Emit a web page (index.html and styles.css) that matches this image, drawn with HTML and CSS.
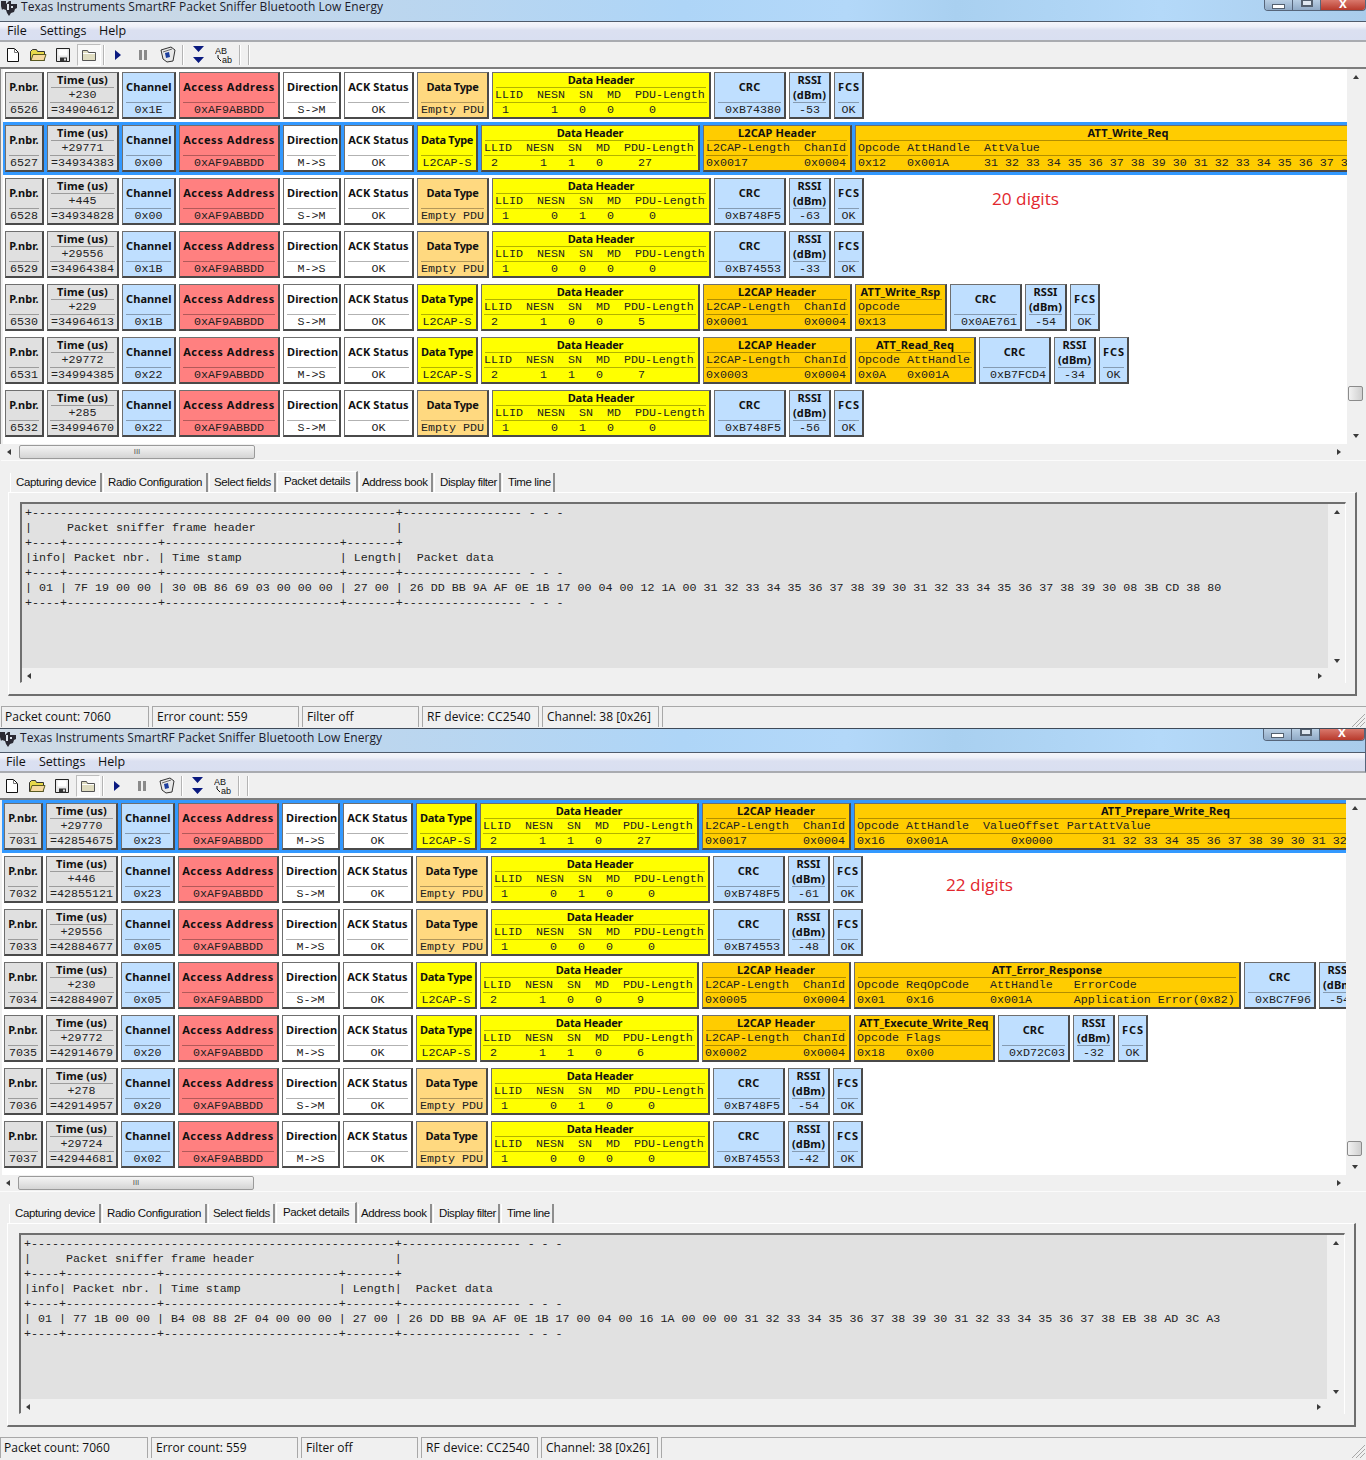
FILE: index.html
```html
<!DOCTYPE html>
<html lang="en">
<head>
<meta charset="utf-8">
<title>Texas Instruments SmartRF Packet Sniffer Bluetooth Low Energy</title>
<link rel="stylesheet" href="styles.css">
</head>
<body>
<svg class="defs" width="0" height="0">
  <symbol id="i-logo" viewBox="0 0 18 16"><path d="M1 1h5v3l3-3h2v3h6v4l-2 1-1 3-3 1-2 3-2-3-1-3-3-1-1 1-1-4z" fill="#2a2a33"/><path d="M7 4h2v6H7zM11 6h2v2h-2z" fill="#dfe6ee"/></symbol>
  <symbol id="i-new" viewBox="0 0 14 16"><path d="M1.500 1.500h7l4 4v9h-11z" fill="#fff" stroke="#111"/><path d="M8.500 1.500v4h4" fill="none" stroke="#777"/></symbol>
  <symbol id="i-open" viewBox="0 0 18 16"><path d="M1.500 13.500v-9l2-2h4l1 2h7v9z" fill="#e8d84a" stroke="#333"/><path d="M2 13.500l2-6h13l-2 6z" fill="#f6d9a0" stroke="#5a5a20"/></symbol>
  <symbol id="i-save" viewBox="0 0 16 16"><path d="M1.500 1.500h13v13h-13z" fill="#e8e8e8" stroke="#222"/><path d="M3.500 2.500h9v6h-9z" fill="#fff"/><path d="M5 10.500h7v4H5z" fill="#333"/><path d="M9 11.500h2v2H9z" fill="#ddd"/></symbol>
  <symbol id="i-folder" viewBox="0 0 16 14"><path d="M1.500 12.500v-10h5l1 2h7v8z" fill="#dfdcc0" stroke="#555"/><path d="M2 5.500h12" stroke="#fff"/></symbol>
  <symbol id="i-play" viewBox="0 0 8 12"><path d="M1 1l6 5-6 5z" fill="#0a1a80"/></symbol>
  <symbol id="i-pause" viewBox="0 0 10 10"><path d="M1 0h3v10H1zM6 0h3v10H6z" fill="#8a8a8a"/></symbol>
  <symbol id="i-bin" viewBox="0 0 16 17"><path d="M1 4l10-3 4 3-2 11-6 1-4-3z" fill="#e8e8e8" stroke="#333"/><path d="M5 7l4-1 1 5-4 1z" fill="#1e3f9e"/><path d="M3 6l9-3" stroke="#666"/></symbol>
  <symbol id="i-down" viewBox="0 0 11 17"><path d="M0 0h11L5.500 6zM0 11h11l-5.500 6z" fill="#0a1a80"/></symbol>
  <symbol id="i-ab" viewBox="0 0 18 18"><text x="0" y="8" class="ab">AB</text><text x="7" y="17" class="ab">ab</text><path d="M3 9v3l3 3" fill="none" stroke="#111"/></symbol>
  <symbol id="i-grip" viewBox="0 0 16 16"><path d="M15 2L2 15M15 6L6 15M15 10l-5 5" stroke="#a8a8a8"/></symbol>
</svg>

<section class="win">
  <header class="title"><svg class="logo"><use href="#i-logo"/></svg><span class="title-text">Texas Instruments SmartRF Packet Sniffer Bluetooth Low Energy</span><div class="wctl"><span class="wmin"><i></i></span><span class="wmax"><i></i></span><span class="wcls">x</span></div></header>
  <nav class="menu"><span>File</span><span>Settings</span><span>Help</span></nav>
  <div class="toolbar">
    <span class="tb"><svg class="s14"><use href="#i-new"/></svg></span><span class="tb"><svg class="s18"><use href="#i-open"/></svg></span><span class="tb"><svg class="s16"><use href="#i-save"/></svg></span><span class="tb on"><svg class="s16"><use href="#i-folder"/></svg></span><span class="sep s1"></span><span class="tb p1"><svg class="s8"><use href="#i-play"/></svg></span><span class="tb"><svg class="s10"><use href="#i-pause"/></svg></span><span class="tb"><svg class="s16b"><use href="#i-bin"/></svg></span><span class="sep s1"></span><span class="tb p2"><svg class="s11"><use href="#i-down"/></svg></span><span class="tb"><svg class="s18b"><use href="#i-ab"/></svg></span><span class="sep s3"></span><span class="sep s4"></span>
  </div>
  <div class="list">
    <div class="pane">
      <div class="row">
        <div class="c gray w-pn"><b class="t2">P.nbr.</b><span class="v">6526</span></div>
        <div class="c gray w-tm"><b class="t">Time (us)</b><span class="m">+230</span><span class="v">=34904612</span></div>
        <div class="c blue w-ch"><b class="t2">Channel</b><span class="v">0x1E</span></div>
        <div class="c red w-aa"><b class="t2">Access Address</b><span class="v">0xAF9ABBDD</span></div>
        <div class="c white w-dr"><b class="t2">Direction</b><span class="v">S-&gt;M</span></div>
        <div class="c white w-ak"><b class="t2">ACK Status</b><span class="v">OK</span></div>
        <div class="c amber w-dt"><b class="t2">Data Type</b><span class="v">Empty PDU</span></div>
        <div class="c yel w-dh"><b class="t">Data Header</b><span class="m pre">LLID  NESN  SN  MD  PDU-Length</span><span class="v pre"> 1      1   0   0     0</span></div>
        <div class="c blue w-cr"><b class="t2">CRC</b><span class="v crc">0xB74380</span></div>
        <div class="c blue w-rs"><b class="t0">RSSI</b><b class="t">(dBm)</b><span class="v">-53</span></div>
        <div class="c blue w-fc"><b class="t2">FCS</b><span class="v">OK</span></div>
      </div>
      <div class="row sel">
        <div class="c gray w-pn"><b class="t2">P.nbr.</b><span class="v">6527</span></div>
        <div class="c gray w-tm"><b class="t">Time (us)</b><span class="m">+29771</span><span class="v">=34934383</span></div>
        <div class="c blue w-ch"><b class="t2">Channel</b><span class="v">0x00</span></div>
        <div class="c red w-aa"><b class="t2">Access Address</b><span class="v">0xAF9ABBDD</span></div>
        <div class="c white w-dr"><b class="t2">Direction</b><span class="v">M-&gt;S</span></div>
        <div class="c white w-ak"><b class="t2">ACK Status</b><span class="v">OK</span></div>
        <div class="c yel w-d2"><b class="t2">Data Type</b><span class="v">L2CAP-S</span></div>
        <div class="c yel w-dh"><b class="t">Data Header</b><span class="m pre">LLID  NESN  SN  MD  PDU-Length</span><span class="v pre"> 2      1   1   0     27</span></div>
        <div class="c org w-l2"><b class="t">L2CAP Header</b><span class="m pre">L2CAP-Length  ChanId</span><span class="v pre">0x0017        0x0004</span></div>
        <div class="c org w-wr"><b class="t">ATT_Write_Req</b><span class="m pre">Opcode AttHandle  AttValue</span><span class="v pre">0x12   0x001A     31 32 33 34 35 36 37 38 39 30 31 32 33 34 35 36 37 38 39 30</span></div>
      </div>
      <div class="row">
        <div class="c gray w-pn"><b class="t2">P.nbr.</b><span class="v">6528</span></div>
        <div class="c gray w-tm"><b class="t">Time (us)</b><span class="m">+445</span><span class="v">=34934828</span></div>
        <div class="c blue w-ch"><b class="t2">Channel</b><span class="v">0x00</span></div>
        <div class="c red w-aa"><b class="t2">Access Address</b><span class="v">0xAF9ABBDD</span></div>
        <div class="c white w-dr"><b class="t2">Direction</b><span class="v">S-&gt;M</span></div>
        <div class="c white w-ak"><b class="t2">ACK Status</b><span class="v">OK</span></div>
        <div class="c amber w-dt"><b class="t2">Data Type</b><span class="v">Empty PDU</span></div>
        <div class="c yel w-dh"><b class="t">Data Header</b><span class="m pre">LLID  NESN  SN  MD  PDU-Length</span><span class="v pre"> 1      0   1   0     0</span></div>
        <div class="c blue w-cr"><b class="t2">CRC</b><span class="v crc">0xB748F5</span></div>
        <div class="c blue w-rs"><b class="t0">RSSI</b><b class="t">(dBm)</b><span class="v">-63</span></div>
        <div class="c blue w-fc"><b class="t2">FCS</b><span class="v">OK</span></div>
      </div>
      <div class="row">
        <div class="c gray w-pn"><b class="t2">P.nbr.</b><span class="v">6529</span></div>
        <div class="c gray w-tm"><b class="t">Time (us)</b><span class="m">+29556</span><span class="v">=34964384</span></div>
        <div class="c blue w-ch"><b class="t2">Channel</b><span class="v">0x1B</span></div>
        <div class="c red w-aa"><b class="t2">Access Address</b><span class="v">0xAF9ABBDD</span></div>
        <div class="c white w-dr"><b class="t2">Direction</b><span class="v">M-&gt;S</span></div>
        <div class="c white w-ak"><b class="t2">ACK Status</b><span class="v">OK</span></div>
        <div class="c amber w-dt"><b class="t2">Data Type</b><span class="v">Empty PDU</span></div>
        <div class="c yel w-dh"><b class="t">Data Header</b><span class="m pre">LLID  NESN  SN  MD  PDU-Length</span><span class="v pre"> 1      0   0   0     0</span></div>
        <div class="c blue w-cr"><b class="t2">CRC</b><span class="v crc">0xB74553</span></div>
        <div class="c blue w-rs"><b class="t0">RSSI</b><b class="t">(dBm)</b><span class="v">-33</span></div>
        <div class="c blue w-fc"><b class="t2">FCS</b><span class="v">OK</span></div>
      </div>
      <div class="row">
        <div class="c gray w-pn"><b class="t2">P.nbr.</b><span class="v">6530</span></div>
        <div class="c gray w-tm"><b class="t">Time (us)</b><span class="m">+229</span><span class="v">=34964613</span></div>
        <div class="c blue w-ch"><b class="t2">Channel</b><span class="v">0x1B</span></div>
        <div class="c red w-aa"><b class="t2">Access Address</b><span class="v">0xAF9ABBDD</span></div>
        <div class="c white w-dr"><b class="t2">Direction</b><span class="v">S-&gt;M</span></div>
        <div class="c white w-ak"><b class="t2">ACK Status</b><span class="v">OK</span></div>
        <div class="c yel w-d2"><b class="t2">Data Type</b><span class="v">L2CAP-S</span></div>
        <div class="c yel w-dh"><b class="t">Data Header</b><span class="m pre">LLID  NESN  SN  MD  PDU-Length</span><span class="v pre"> 2      1   0   0     5</span></div>
        <div class="c org w-l2"><b class="t">L2CAP Header</b><span class="m pre">L2CAP-Length  ChanId</span><span class="v pre">0x0001        0x0004</span></div>
        <div class="c org w-rp"><b class="t">ATT_Write_Rsp</b><span class="m pre">Opcode</span><span class="v pre">0x13</span></div>
        <div class="c blue w-cr"><b class="t2">CRC</b><span class="v crc">0x0AE761</span></div>
        <div class="c blue w-rs"><b class="t0">RSSI</b><b class="t">(dBm)</b><span class="v">-54</span></div>
        <div class="c blue w-fc"><b class="t2">FCS</b><span class="v">OK</span></div>
      </div>
      <div class="row">
        <div class="c gray w-pn"><b class="t2">P.nbr.</b><span class="v">6531</span></div>
        <div class="c gray w-tm"><b class="t">Time (us)</b><span class="m">+29772</span><span class="v">=34994385</span></div>
        <div class="c blue w-ch"><b class="t2">Channel</b><span class="v">0x22</span></div>
        <div class="c red w-aa"><b class="t2">Access Address</b><span class="v">0xAF9ABBDD</span></div>
        <div class="c white w-dr"><b class="t2">Direction</b><span class="v">M-&gt;S</span></div>
        <div class="c white w-ak"><b class="t2">ACK Status</b><span class="v">OK</span></div>
        <div class="c yel w-d2"><b class="t2">Data Type</b><span class="v">L2CAP-S</span></div>
        <div class="c yel w-dh"><b class="t">Data Header</b><span class="m pre">LLID  NESN  SN  MD  PDU-Length</span><span class="v pre"> 2      1   1   0     7</span></div>
        <div class="c org w-l2"><b class="t">L2CAP Header</b><span class="m pre">L2CAP-Length  ChanId</span><span class="v pre">0x0003        0x0004</span></div>
        <div class="c org w-rd"><b class="t">ATT_Read_Req</b><span class="m pre">Opcode AttHandle</span><span class="v pre">0x0A   0x001A</span></div>
        <div class="c blue w-cr"><b class="t2">CRC</b><span class="v crc">0xB7FCD4</span></div>
        <div class="c blue w-rs"><b class="t0">RSSI</b><b class="t">(dBm)</b><span class="v">-34</span></div>
        <div class="c blue w-fc"><b class="t2">FCS</b><span class="v">OK</span></div>
      </div>
      <div class="row">
        <div class="c gray w-pn"><b class="t2">P.nbr.</b><span class="v">6532</span></div>
        <div class="c gray w-tm"><b class="t">Time (us)</b><span class="m">+285</span><span class="v">=34994670</span></div>
        <div class="c blue w-ch"><b class="t2">Channel</b><span class="v">0x22</span></div>
        <div class="c red w-aa"><b class="t2">Access Address</b><span class="v">0xAF9ABBDD</span></div>
        <div class="c white w-dr"><b class="t2">Direction</b><span class="v">S-&gt;M</span></div>
        <div class="c white w-ak"><b class="t2">ACK Status</b><span class="v">OK</span></div>
        <div class="c amber w-dt"><b class="t2">Data Type</b><span class="v">Empty PDU</span></div>
        <div class="c yel w-dh"><b class="t">Data Header</b><span class="m pre">LLID  NESN  SN  MD  PDU-Length</span><span class="v pre"> 1      0   1   0     0</span></div>
        <div class="c blue w-cr"><b class="t2">CRC</b><span class="v crc">0xB748F5</span></div>
        <div class="c blue w-rs"><b class="t0">RSSI</b><b class="t">(dBm)</b><span class="v">-56</span></div>
        <div class="c blue w-fc"><b class="t2">FCS</b><span class="v">OK</span></div>
      </div>
      <span class="note note1">20 digits</span>
    </div>
    <div class="vbar"><i class="au"></i><i class="thumb"></i><i class="ad"></i></div>
  </div>
  <div class="hbar"><i class="al"></i><span class="hthumb"><em>III</em></span><i class="ar"></i></div>
  <div class="tabs"><span class="tab t-a">Capturing device</span><span class="tab t-b">Radio Configuration</span><span class="tab t-c">Select fields</span><span class="tab t-d cur">Packet details</span><span class="tab t-e">Address book</span><span class="tab t-f">Display filter</span><span class="tab t-g">Time line</span></div>
  <div class="panel">
    <div class="box">
      <div class="box-top">
        <pre class="dump">+----------------------------------------------------+----------------- - - -
|     Packet sniffer frame header                    |
+----+-------------+-------------------------+-------+
|info| Packet nbr. | Time stamp              | Length|  Packet data
+----+-------------+-------------------------+-------+----------------- - - -
| 01 | 7F 19 00 00 | 30 0B 86 69 03 00 00 00 | 27 00 | 26 DD BB 9A AF 0E 1B 17 00 04 00 12 1A 00 31 32 33 34 35 36 37 38 39 30 31 32 33 34 35 36 37 38 39 30 08 3B CD 38 80
+----+-------------+-------------------------+-------+----------------- - - -</pre>
        <div class="vbar small"><i class="au"></i><i class="ad"></i></div>
      </div>
      <div class="hbar small"><i class="al"></i><i class="ar"></i></div>
    </div>
  </div>
  <footer class="status"><span class="sp sa">Packet count: 7060</span><span class="sp sb">Error count: 559</span><span class="sp sc">Filter off</span><span class="sp sd">RF device: CC2540</span><span class="sp se">Channel: 38 [0x26]</span><span class="sp sf"></span><svg class="grip"><use href="#i-grip"/></svg></footer>
</section>

<section class="win win2">
  <header class="title"><svg class="logo"><use href="#i-logo"/></svg><span class="title-text">Texas Instruments SmartRF Packet Sniffer Bluetooth Low Energy</span><div class="wctl"><span class="wmin"><i></i></span><span class="wmax"><i></i></span><span class="wcls">x</span></div></header>
  <nav class="menu"><span>File</span><span>Settings</span><span>Help</span></nav>
  <div class="toolbar">
    <span class="tb"><svg class="s14"><use href="#i-new"/></svg></span><span class="tb"><svg class="s18"><use href="#i-open"/></svg></span><span class="tb"><svg class="s16"><use href="#i-save"/></svg></span><span class="tb on"><svg class="s16"><use href="#i-folder"/></svg></span><span class="sep s1"></span><span class="tb p1"><svg class="s8"><use href="#i-play"/></svg></span><span class="tb"><svg class="s10"><use href="#i-pause"/></svg></span><span class="tb"><svg class="s16b"><use href="#i-bin"/></svg></span><span class="sep s1"></span><span class="tb p2"><svg class="s11"><use href="#i-down"/></svg></span><span class="tb"><svg class="s18b"><use href="#i-ab"/></svg></span><span class="sep s3"></span><span class="sep s4"></span>
  </div>
  <div class="list">
    <div class="pane">
      <div class="row sel">
        <div class="c gray w-pn"><b class="t2">P.nbr.</b><span class="v">7031</span></div>
        <div class="c gray w-tm"><b class="t">Time (us)</b><span class="m">+29770</span><span class="v">=42854675</span></div>
        <div class="c blue w-ch"><b class="t2">Channel</b><span class="v">0x23</span></div>
        <div class="c red w-aa"><b class="t2">Access Address</b><span class="v">0xAF9ABBDD</span></div>
        <div class="c white w-dr"><b class="t2">Direction</b><span class="v">M-&gt;S</span></div>
        <div class="c white w-ak"><b class="t2">ACK Status</b><span class="v">OK</span></div>
        <div class="c yel w-d2"><b class="t2">Data Type</b><span class="v">L2CAP-S</span></div>
        <div class="c yel w-dh"><b class="t">Data Header</b><span class="m pre">LLID  NESN  SN  MD  PDU-Length</span><span class="v pre"> 2      1   1   0     27</span></div>
        <div class="c org w-l2"><b class="t">L2CAP Header</b><span class="m pre">L2CAP-Length  ChanId</span><span class="v pre">0x0017        0x0004</span></div>
        <div class="c org w-pr"><b class="t">ATT_Prepare_Write_Req</b><span class="m pre">Opcode AttHandle  ValueOffset PartAttValue</span><span class="v pre">0x16   0x001A         0x0000       31 32 33 34 35 36 37 38 39 30 31 32 33 34 35 36 37 38</span></div>
      </div>
      <div class="row">
        <div class="c gray w-pn"><b class="t2">P.nbr.</b><span class="v">7032</span></div>
        <div class="c gray w-tm"><b class="t">Time (us)</b><span class="m">+446</span><span class="v">=42855121</span></div>
        <div class="c blue w-ch"><b class="t2">Channel</b><span class="v">0x23</span></div>
        <div class="c red w-aa"><b class="t2">Access Address</b><span class="v">0xAF9ABBDD</span></div>
        <div class="c white w-dr"><b class="t2">Direction</b><span class="v">S-&gt;M</span></div>
        <div class="c white w-ak"><b class="t2">ACK Status</b><span class="v">OK</span></div>
        <div class="c amber w-dt"><b class="t2">Data Type</b><span class="v">Empty PDU</span></div>
        <div class="c yel w-dh"><b class="t">Data Header</b><span class="m pre">LLID  NESN  SN  MD  PDU-Length</span><span class="v pre"> 1      0   1   0     0</span></div>
        <div class="c blue w-cr"><b class="t2">CRC</b><span class="v crc">0xB748F5</span></div>
        <div class="c blue w-rs"><b class="t0">RSSI</b><b class="t">(dBm)</b><span class="v">-61</span></div>
        <div class="c blue w-fc"><b class="t2">FCS</b><span class="v">OK</span></div>
      </div>
      <div class="row">
        <div class="c gray w-pn"><b class="t2">P.nbr.</b><span class="v">7033</span></div>
        <div class="c gray w-tm"><b class="t">Time (us)</b><span class="m">+29556</span><span class="v">=42884677</span></div>
        <div class="c blue w-ch"><b class="t2">Channel</b><span class="v">0x05</span></div>
        <div class="c red w-aa"><b class="t2">Access Address</b><span class="v">0xAF9ABBDD</span></div>
        <div class="c white w-dr"><b class="t2">Direction</b><span class="v">M-&gt;S</span></div>
        <div class="c white w-ak"><b class="t2">ACK Status</b><span class="v">OK</span></div>
        <div class="c amber w-dt"><b class="t2">Data Type</b><span class="v">Empty PDU</span></div>
        <div class="c yel w-dh"><b class="t">Data Header</b><span class="m pre">LLID  NESN  SN  MD  PDU-Length</span><span class="v pre"> 1      0   0   0     0</span></div>
        <div class="c blue w-cr"><b class="t2">CRC</b><span class="v crc">0xB74553</span></div>
        <div class="c blue w-rs"><b class="t0">RSSI</b><b class="t">(dBm)</b><span class="v">-48</span></div>
        <div class="c blue w-fc"><b class="t2">FCS</b><span class="v">OK</span></div>
      </div>
      <div class="row">
        <div class="c gray w-pn"><b class="t2">P.nbr.</b><span class="v">7034</span></div>
        <div class="c gray w-tm"><b class="t">Time (us)</b><span class="m">+230</span><span class="v">=42884907</span></div>
        <div class="c blue w-ch"><b class="t2">Channel</b><span class="v">0x05</span></div>
        <div class="c red w-aa"><b class="t2">Access Address</b><span class="v">0xAF9ABBDD</span></div>
        <div class="c white w-dr"><b class="t2">Direction</b><span class="v">S-&gt;M</span></div>
        <div class="c white w-ak"><b class="t2">ACK Status</b><span class="v">OK</span></div>
        <div class="c yel w-d2"><b class="t2">Data Type</b><span class="v">L2CAP-S</span></div>
        <div class="c yel w-dh"><b class="t">Data Header</b><span class="m pre">LLID  NESN  SN  MD  PDU-Length</span><span class="v pre"> 2      1   0   0     9</span></div>
        <div class="c org w-l2"><b class="t">L2CAP Header</b><span class="m pre">L2CAP-Length  ChanId</span><span class="v pre">0x0005        0x0004</span></div>
        <div class="c org w-er"><b class="t">ATT_Error_Response</b><span class="m pre">Opcode ReqOpCode   AttHandle   ErrorCode</span><span class="v pre">0x01   0x16        0x001A      Application Error(0x82)</span></div>
        <div class="c blue w-cr"><b class="t2">CRC</b><span class="v crc">0xBC7F96</span></div>
        <div class="c blue w-rs"><b class="t0">RSSI</b><b class="t">(dBm)</b><span class="v">-54</span></div>
        <div class="c blue w-fc"><b class="t2">FCS</b><span class="v">OK</span></div>
      </div>
      <div class="row">
        <div class="c gray w-pn"><b class="t2">P.nbr.</b><span class="v">7035</span></div>
        <div class="c gray w-tm"><b class="t">Time (us)</b><span class="m">+29772</span><span class="v">=42914679</span></div>
        <div class="c blue w-ch"><b class="t2">Channel</b><span class="v">0x20</span></div>
        <div class="c red w-aa"><b class="t2">Access Address</b><span class="v">0xAF9ABBDD</span></div>
        <div class="c white w-dr"><b class="t2">Direction</b><span class="v">M-&gt;S</span></div>
        <div class="c white w-ak"><b class="t2">ACK Status</b><span class="v">OK</span></div>
        <div class="c yel w-d2"><b class="t2">Data Type</b><span class="v">L2CAP-S</span></div>
        <div class="c yel w-dh"><b class="t">Data Header</b><span class="m pre">LLID  NESN  SN  MD  PDU-Length</span><span class="v pre"> 2      1   1   0     6</span></div>
        <div class="c org w-l2"><b class="t">L2CAP Header</b><span class="m pre">L2CAP-Length  ChanId</span><span class="v pre">0x0002        0x0004</span></div>
        <div class="c org w-ex"><b class="t">ATT_Execute_Write_Req</b><span class="m pre">Opcode Flags</span><span class="v pre">0x18   0x00</span></div>
        <div class="c blue w-cr"><b class="t2">CRC</b><span class="v crc">0xD72C03</span></div>
        <div class="c blue w-rs"><b class="t0">RSSI</b><b class="t">(dBm)</b><span class="v">-32</span></div>
        <div class="c blue w-fc"><b class="t2">FCS</b><span class="v">OK</span></div>
      </div>
      <div class="row">
        <div class="c gray w-pn"><b class="t2">P.nbr.</b><span class="v">7036</span></div>
        <div class="c gray w-tm"><b class="t">Time (us)</b><span class="m">+278</span><span class="v">=42914957</span></div>
        <div class="c blue w-ch"><b class="t2">Channel</b><span class="v">0x20</span></div>
        <div class="c red w-aa"><b class="t2">Access Address</b><span class="v">0xAF9ABBDD</span></div>
        <div class="c white w-dr"><b class="t2">Direction</b><span class="v">S-&gt;M</span></div>
        <div class="c white w-ak"><b class="t2">ACK Status</b><span class="v">OK</span></div>
        <div class="c amber w-dt"><b class="t2">Data Type</b><span class="v">Empty PDU</span></div>
        <div class="c yel w-dh"><b class="t">Data Header</b><span class="m pre">LLID  NESN  SN  MD  PDU-Length</span><span class="v pre"> 1      0   1   0     0</span></div>
        <div class="c blue w-cr"><b class="t2">CRC</b><span class="v crc">0xB748F5</span></div>
        <div class="c blue w-rs"><b class="t0">RSSI</b><b class="t">(dBm)</b><span class="v">-54</span></div>
        <div class="c blue w-fc"><b class="t2">FCS</b><span class="v">OK</span></div>
      </div>
      <div class="row">
        <div class="c gray w-pn"><b class="t2">P.nbr.</b><span class="v">7037</span></div>
        <div class="c gray w-tm"><b class="t">Time (us)</b><span class="m">+29724</span><span class="v">=42944681</span></div>
        <div class="c blue w-ch"><b class="t2">Channel</b><span class="v">0x02</span></div>
        <div class="c red w-aa"><b class="t2">Access Address</b><span class="v">0xAF9ABBDD</span></div>
        <div class="c white w-dr"><b class="t2">Direction</b><span class="v">M-&gt;S</span></div>
        <div class="c white w-ak"><b class="t2">ACK Status</b><span class="v">OK</span></div>
        <div class="c amber w-dt"><b class="t2">Data Type</b><span class="v">Empty PDU</span></div>
        <div class="c yel w-dh"><b class="t">Data Header</b><span class="m pre">LLID  NESN  SN  MD  PDU-Length</span><span class="v pre"> 1      0   0   0     0</span></div>
        <div class="c blue w-cr"><b class="t2">CRC</b><span class="v crc">0xB74553</span></div>
        <div class="c blue w-rs"><b class="t0">RSSI</b><b class="t">(dBm)</b><span class="v">-42</span></div>
        <div class="c blue w-fc"><b class="t2">FCS</b><span class="v">OK</span></div>
      </div>
      <span class="note note2">22 digits</span>
    </div>
    <div class="vbar"><i class="au"></i><i class="thumb"></i><i class="ad"></i></div>
  </div>
  <div class="hbar"><i class="al"></i><span class="hthumb"><em>III</em></span><i class="ar"></i></div>
  <div class="tabs"><span class="tab t-a">Capturing device</span><span class="tab t-b">Radio Configuration</span><span class="tab t-c">Select fields</span><span class="tab t-d cur">Packet details</span><span class="tab t-e">Address book</span><span class="tab t-f">Display filter</span><span class="tab t-g">Time line</span></div>
  <div class="panel">
    <div class="box">
      <div class="box-top">
        <pre class="dump">+----------------------------------------------------+----------------- - - -
|     Packet sniffer frame header                    |
+----+-------------+-------------------------+-------+
|info| Packet nbr. | Time stamp              | Length|  Packet data
+----+-------------+-------------------------+-------+----------------- - - -
| 01 | 77 1B 00 00 | B4 08 88 2F 04 00 00 00 | 27 00 | 26 DD BB 9A AF 0E 1B 17 00 04 00 16 1A 00 00 00 31 32 33 34 35 36 37 38 39 30 31 32 33 34 35 36 37 38 EB 38 AD 3C A3
+----+-------------+-------------------------+-------+----------------- - - -</pre>
        <div class="vbar small"><i class="au"></i><i class="ad"></i></div>
      </div>
      <div class="hbar small"><i class="al"></i><i class="ar"></i></div>
    </div>
  </div>
  <footer class="status"><span class="sp sa">Packet count: 7060</span><span class="sp sb">Error count: 559</span><span class="sp sc">Filter off</span><span class="sp sd">RF device: CC2540</span><span class="sp se">Channel: 38 [0x26]</span><span class="sp sf"></span><svg class="grip"><use href="#i-grip"/></svg></footer>
</section>
</body>
</html>
```
FILE: styles.css
```css
* { box-sizing: border-box; }
html, body { margin: 0; padding: 0; }
body { width: 1366px; height: 1460px; overflow: hidden; background: #f0f0f0; font-family: "Liberation Sans", Arial, sans-serif; color: #111; }
.defs { position: absolute; }
.ab { font: 9px "Liberation Sans", sans-serif; fill: #111; }

.win { width: 1366px; height: 728px; position: relative; background: #f0f0f0; overflow: hidden; }
.win2 { width: 1367px; height: 732px; margin-left: -1px; }

/* title bar */
.title { height: 22px; display: flex; border-bottom: 1px solid #4f5b6b; font: 12px "Open Sans", sans-serif; letter-spacing: .05px; color: #1c1c2c;
  background: linear-gradient(90deg, #cfdbe6 0, #c9d8e6 12%, #bcd6ee 28%, #aed5f7 50%, #b3d8f9 62%, #a9d0f0 70%, #b4d9f9 85%, #a9cceb 100%); }
.logo { width: 18px; height: 16px; flex: none; margin: 0 3px 0 0; }
.title-text { line-height: 14px; }
.win2 .title { height: 25px; border-top: 1px solid #3f4a58; border-right: 1px solid #56657a; padding-top: 2px; }
.wctl { margin-left: auto; width: 102px; height: 11px; display: flex; border: 1px solid #56657a; border-top: 0; border-radius: 0 0 4px 4px; overflow: hidden; }
.win2 .wctl { height: 12px; margin-top: -2px; }
.wmin, .wmax { width: 28px; border-right: 1px solid #56657a; background: linear-gradient(#b9cfe4, #90aac6); display: flex; justify-content: center; }
.wmin i { width: 13px; height: 5px; margin-top: 4px; background: #fff; border: 1px solid #53606f; }
.wmax i { width: 12px; height: 8px; margin-top: -1px; background: #dfe8f1; border: 2px solid #53606f; }
.wcls { flex: 1; background: linear-gradient(#d9786c, #b83a2c); color: #fff; font: bold 14px/7px "Liberation Sans", sans-serif; text-align: center; }

/* menu */
.menu { height: 20px; display: flex; font: 12.500px/18px "Open Sans", sans-serif; padding-left: 7px; border-bottom: 2px solid #a9abb0; background: linear-gradient(#f5f6fb 0, #eef0f8 25%, #dbe0f1 45%, #d9dff1 100%); }
.win2 .menu { border-right: 1px solid #56657a; }
.menu span:nth-child(1) { width: 33px; }
.menu span:nth-child(2) { width: 59px; }

/* toolbar */
.toolbar { height: 27px; display: flex; align-items: center; border-bottom: 2px solid #7d7d7d; }
.tb { width: 25px; height: 24px; flex: none; display: flex; align-items: center; justify-content: center; }
.tb.on { width: 24px; margin-left: 2px; height: 22px; background: #f8f8f8; border: 1px solid; border-color: #bdbdbd #fff #fff #bdbdbd; }
.tb.p1 { margin-left: 1px; }
.tb.p2 { margin-left: 3px; }
.sep { width: 1px; height: 20px; background: #b4b4b4; flex: none; box-shadow: 1px 0 #fff; }
.s1 { margin-left: 2px; }
.s3 { margin-left: 3px; }
.s4 { margin-left: 8px; }
.s14 { width: 14px; height: 16px; }
.s18 { width: 18px; height: 16px; }
.s16 { width: 16px; height: 16px; }
.s8 { width: 8px; height: 12px; }
.s10 { width: 10px; height: 10px; }
.s16b { width: 16px; height: 17px; }
.s11 { width: 11px; height: 17px; }
.s18b { width: 18px; height: 18px; }

/* packet list */
.list { height: 375px; display: flex; padding-left: 2px; border-left: 1px solid #8a8a8a; }
.pane { flex: 1; min-width: 0; background: #fff; overflow: hidden; position: relative; }
.row { height: 53px; padding: 3px 0 3px 2px; display: flex; gap: 3px; white-space: nowrap; }
.row.sel { background: #3399ff; }
.c { flex: none; height: 47px; display: flex; flex-direction: column; border: 1px solid #6f6f6f; border-right: 2px solid #4a4a4a; border-bottom: 2px solid #4a4a4a; font: 11.670px/14px "Liberation Mono", "Courier New", monospace; text-align: center; color: #222; }
.c b { font: bold 11px/14px "Noto Sans", sans-serif; color: #111; letter-spacing: .1px; }
.c.w-aa b { letter-spacing: .6px; }
.c.w-dh b { letter-spacing: -.2px; }
.c.w-fc b { letter-spacing: 1px; }
.c.w-dt b, .c.w-d2 b { letter-spacing: -.3px; }
.t { height: 15px; margin: 0 3px; border-bottom: 1px solid rgba(0,0,0,.3); }
.t0 { height: 15px; }
.c .t2 { height: 30px; line-height: 27px; margin: 0 3px; border-bottom: 1px solid rgba(0,0,0,.3); }
.m { height: 15px; line-height: 15px; margin: 0 2px; border-bottom: 1px solid rgba(0,0,0,.3); }
.v { height: 14px; margin: 0 2px; }
.pre { white-space: pre; text-align: left; }
.crc { text-align: right; margin-right: 3px; }
.gray { background: #e0e0e0; }
.blue { background: #bfdfff; }
.red { background: #ff8080; }
.white { background: #fff; }
.amber { background: #ffd980; }
.yel { background: #ffff00; }
.org { background: #ffcc00; }
.w-pn { width: 39px; }
.w-tm { width: 72px; }
.w-ch { width: 54px; }
.w-aa { width: 101px; }
.w-dr { width: 58px; }
.w-ak { width: 70px; }
.w-dt { width: 72px; }
.w-d2 { width: 61px; }
.w-dh { width: 219px; }
.w-l2 { width: 149px; }
.w-cr { width: 72px; }
.w-rs { width: 42px; }
.w-fc { width: 30px; }
.w-rp { width: 92px; }
.w-rd { width: 121px; }
.w-wr { width: 547px; }
.w-pr { width: 624px; }
.w-er { width: 387px; }
.w-ex { width: 141px; }
.note { position: absolute; font: 17.200px/22px "Open Sans", sans-serif; color: #e2272e; }
.note1 { left: 989px; top: 119px; }
.note2 { left: 944px; top: 74px; }

/* scrollbars */
.vbar { width: 17px; flex: none; background: #f0f0f0; display: flex; flex-direction: column; align-items: center; padding: 6px 0; margin-right: 2px; }
.win2 .vbar { margin-right: 3px; }
.vbar i, .hbar i { display: block; flex: none; width: 0; height: 0; }
.au { border: 3.500px solid transparent; border-top: 0; border-bottom: 4px solid #3a3a3a; }
.ad { border: 3.500px solid transparent; border-bottom: 0; border-top: 4px solid #3a3a3a; }
.vbar .thumb { width: 15px; height: 15px; border: 1px solid #8b8b8b; border-radius: 2px; background: linear-gradient(90deg, #f2f2f2, #cfcfcf); margin-top: auto; margin-bottom: 33px; }
.win2 .vbar .thumb { margin-bottom: 9px; }
.hbar { height: 17px; display: flex; align-items: center; padding-left: 6px; margin-left: 1px; border-bottom: 1px solid #fbfbfb; }
.al { border: 3.500px solid transparent; border-left: 0; border-right: 4px solid #3a3a3a; }
.ar { border: 3.500px solid transparent; border-right: 0; border-left: 4px solid #3a3a3a; margin-left: auto; margin-right: 25px; }
.hthumb { width: 236px; height: 14px; margin-left: 8px; border: 1px solid #9a9a9a; border-radius: 2px; background: linear-gradient(#f4f4f4, #d4d4d4); text-align: center; }
.hthumb em { display: block; font: 8px/12px "Liberation Sans", sans-serif; color: #555; }

/* tabs */
.tabs { height: 31px; padding: 12px 0 0 10px; display: flex; font: 11.500px/18px "Liberation Sans", sans-serif; letter-spacing: -.4px; white-space: nowrap; }
.tab { height: 19px; border-right: 2px solid #8e8e8e; padding-left: 6px; flex: none; margin-right: 1px; box-shadow: inset 1px 0 #fff; }
.t-a { width: 92px; }
.t-b { width: 105px; padding-left: 5px; }
.t-c { width: 67px; padding-left: 5px; }
.t-d { width: 81px; height: 21px; margin-top: -2px; background: #f4f4f4; padding-left: 7px; border-top: 1px solid #fff; }
.t-e { width: 74px; padding-left: 3px; }
.t-f { width: 67px; padding-left: 6px; }
.t-g { width: 53px; padding-left: 6px; }

/* details panel */
.panel { width: 1349px; height: 204px; margin-left: 8px; padding: 9px 0 0 11px; border: 1px solid; border-color: #fff #6e6e6e #6e6e6e #fff; border-width: 1px 2px 2px 1px; }
.box { width: 1326px; height: 181px; border: 1px solid; border-width: 2px 1px 1px 2px; border-color: #6f6f6f #fff #fff #6f6f6f; }
.box-top { height: 164px; display: flex; background: #e1e1e1; }
.dump { flex: 1; min-width: 0; margin: 0; padding: 2px 0 0 3px; font: 11.670px/15px "Liberation Mono", "Courier New", monospace; color: #222; overflow: hidden; }
.vbar.small { width: 17px; margin: 0; padding: 6px 0 5px; }
.small .ad { margin-top: auto; }
.hbar.small { height: 15px; padding-left: 5px; margin: 0; border: 0; background: #f0f0f0; }
.hbar.small .ar { margin-right: 23px; }

/* status bar */
.status { margin-top: 10px; height: 22px; display: flex; font: 12px/20px "Open Sans", sans-serif; position: relative; padding-left: 1px; }
.sp { height: 21px; border: 1px solid #a8a8a8; border-bottom: 0; padding-left: 3px; flex: none; margin-right: 3px; }
.sa { width: 148px; }
.sb { width: 147px; padding-left: 4px; }
.sc { width: 117px; padding-left: 4px; }
.sd { width: 117px; padding-left: 4px; letter-spacing: .15px; }
.se { width: 117px; padding-left: 4px; }
.sf { flex: 1; margin: 0; border-right: 0; }
.grip { position: absolute; right: 0; bottom: 0; width: 16px; height: 16px; }
```
